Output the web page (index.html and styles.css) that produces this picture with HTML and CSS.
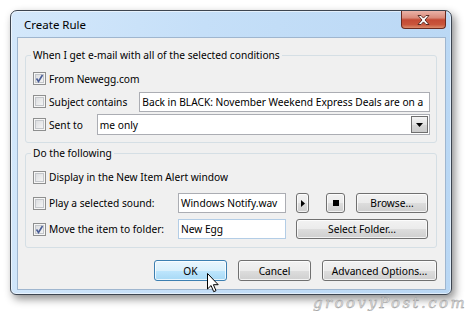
FILE: index.html
```html
<!DOCTYPE html>
<html>
<head>
    <title>Create Rule</title>
    <link rel="stylesheet" href="styles.css">
</head>
<body>
    <div class="window">
        <div class="titlebar">
            <span class="title">Create Rule</span>
            <span class="close">
                <svg width="13" height="10" viewBox="0 0 13 10"><path d="M1 0.5h3l2.5 2.6 2.5-2.6h3l-4 4.5 4 4.5h-3l-2.5-2.6-2.5 2.6h-3l4-4.5z" fill="#fff" stroke="#4b2019" stroke-width="0.9" stroke-linejoin="round"/></svg>
            </span>
        </div>
        <div class="client">
            <fieldset class="group group-when">
                <legend>When I get e-mail with all of the selected conditions</legend>
                <div class="row">
                    <span class="check"><svg width="9" height="9" viewBox="0 0 9 9"><path d="M1.5 4.5l2 3 4-6.5" fill="none" stroke="#4a5d96" stroke-width="1.6"/></svg></span>
                    <span class="label">From Newegg.com</span>
                </div>
                <div class="row">
                    <span class="check"></span>
                    <span class="label">Subject contains</span>
                    <span class="field wide subject">Back in BLACK: November Weekend Express Deals are on a</span>
                </div>
                <div class="row">
                    <span class="check"></span>
                    <span class="label">Sent to</span>
                    <span class="field wide combo">me only
                        <span class="drop"><svg width="7" height="4" viewBox="0 0 7 4"><path d="M0 0h7l-3.5 4z" fill="#000"/></svg></span>
                    </span>
                </div>
            </fieldset>

            <fieldset class="group group-do">
                <legend>Do the following</legend>
                <div class="row">
                    <span class="check"></span>
                    <span class="label">Display in the New Item Alert window</span>
                </div>
                <div class="row">
                    <span class="opt"><span class="check"></span><span class="label">Play a selected sound:</span></span>
                    <span class="field sound">Windows Notify.wav</span>
                    <span class="btn play"><svg width="4" height="7" viewBox="0 0 4 7"><path d="M0 0l4 3.5-4 3.5z" fill="#000"/></svg></span>
                    <span class="btn stop"><svg width="6" height="6" viewBox="0 0 6 6"><rect width="6" height="6" fill="#000"/></svg></span>
                    <span class="btn browse">Browse...</span>
                </div>
                <div class="row">
                    <span class="opt"><span class="check"><svg width="9" height="9" viewBox="0 0 9 9"><path d="M1.5 4.5l2 3 4-6.5" fill="none" stroke="#4a5d96" stroke-width="1.6"/></svg></span><span class="label">Move the item to folder:</span></span>
                    <span class="field folder">New Egg</span>
                    <span class="btn select">Select Folder...</span>
                </div>
            </fieldset>

            <div class="actions">
                <span class="btn big ok">OK
                    <svg class="pointer" width="12" height="20" viewBox="0 0 12 20"><path d="M0.5 0.5v15.5l3.6-3.5 2.6 6.2 2.3-1-2.6-6h4.8z" fill="#fff" stroke="#000" stroke-width="1" stroke-linejoin="round"/></svg>
                </span>
                <span class="btn big">Cancel</span>
                <span class="btn big advanced">Advanced Options...</span>
            </div>
        </div>
    </div>
    <div class="watermark">groovyPost.com</div>
</body>
</html>
```

FILE: styles.css
```css
body {
    margin: 0;
    padding: 10px 0 0 10px;
    font-family: "Noto Sans", sans-serif;
    font-size: 10.2px;
    background: #fff;
    overflow: hidden;
}
.window {
    width: 442px;
    height: 285px;
    box-sizing: border-box;
    border: 1px solid #3d4550;
    border-radius: 7px 7px 6px 6px;
    background: linear-gradient(100deg, #d4e8fb 0%, #c5dff8 40%, #b9d7f4 100%);
    padding: 0 5px 4px 6px;
    box-shadow: 3px 4px 9px rgba(0,0,0,0.45), inset 0 0 0 1px rgba(255,255,255,0.55);
}
.titlebar {
    height: 26px;
    display: flex;
    justify-content: space-between;
    align-items: flex-start;
}
.title {
    font-size: 11.5px;
    line-height: 15px;
    padding: 6px 0 0 7px;
    color: #000;
}
.close {
    width: 45px;
    height: 18px;
    box-sizing: border-box;
    border: 1px solid #6a2a1f;
    border-top: none;
    border-radius: 0 0 4px 4px;
    background: linear-gradient(#eab3a8 0%, #d98a7a 40%, #c44a34 52%, #c9563c 80%, #dc8c6c 100%);
    display: flex;
    align-items: center;
    justify-content: center;
}
.client {
    height: 253px;
    box-sizing: border-box;
    background: #f0f0f0;
    border: 1px solid #9fb6cf;
    padding: 10px 8px 0 7px;
}
.group {
    margin: 0;
    min-width: 0;
    border: 1px solid #d5dfe5;
    border-radius: 3px;
    padding: 4px 6px 6px 7px;
}
.group legend {
    margin-left: -2px;
    padding: 0 2px;
    line-height: 15px;
}
.group-do {
    margin-top: 3px;
    padding: 6px 8px 8px 7px;
}
.row {
    display: flex;
    align-items: center;
    height: 23px;
}
.group-do .row {
    height: 20px;
}
.group-do .row + .row {
    margin-top: 6px;
}
.check {
    flex: none;
    width: 13px;
    height: 13px;
    box-sizing: border-box;
    border: 1px solid #8e8f8f;
    background: linear-gradient(135deg, #d6d8db, #fafafa);
    box-shadow: inset 0 0 0 1px #f6f6f6, inset 0 0 0 2px #c3c6ca;
    margin-right: 3px;
    display: flex;
    align-items: center;
    justify-content: center;
}
.label {
    white-space: nowrap;
}
.opt {
    flex: none;
    width: 145px;
    display: flex;
    align-items: center;
}
.field {
    height: 20px;
    box-sizing: border-box;
    background: #fff;
    border: 1px solid #abadb3;
    padding: 0 3px 0 2px;
    line-height: 18px;
    white-space: nowrap;
    overflow: hidden;
}
.wide {
    flex: 1;
    margin-left: 12px;
}
.combo {
    height: 21px;
    margin-left: 14px;
    display: flex;
    align-items: center;
    justify-content: space-between;
    padding-right: 1px;
}
.drop {
    width: 17px;
    height: 17px;
    box-sizing: border-box;
    border: 1px solid #6f6f6f;
    background: linear-gradient(#f4f4f4, #e2e2e2 50%, #d6d6d6 51%, #cbcbcb);
    display: flex;
    align-items: center;
    justify-content: center;
}
.sound, .folder {
    width: 108px;
    flex: none;
}
.folder {
    border-color: #b3cde6;
}
.btn {
    flex: none;
    height: 20px;
    box-sizing: border-box;
    border: 1px solid #707070;
    border-radius: 3px;
    background: linear-gradient(#f2f2f2 0%, #ebebeb 50%, #dddddd 51%, #cfcfcf 100%);
    box-shadow: inset 0 0 0 1px rgba(255,255,255,0.75);
    display: flex;
    align-items: center;
    justify-content: center;
    color: #000;
    white-space: nowrap;
}
.play {
    width: 13px;
    margin-left: 10px;
}
.stop {
    width: 19px;
    margin-left: 17px;
}
.browse {
    width: 72px;
    margin-left: 11px;
}
.select {
    width: 132px;
    margin-left: 10px;
}
.actions {
    display: flex;
    justify-content: flex-end;
    gap: 11px;
    margin-top: 12px;
}
.big {
    width: 73px;
    height: 21px;
}
.advanced {
    width: 115px;
}
.ok {
    position: relative;
    border-color: #3c7fb1;
    background: linear-gradient(#eaf6fd 0%, #d9f0fc 50%, #bee6fd 51%, #a7d9f5 100%);
}
.pointer {
    position: absolute;
    left: 52px;
    top: 12px;
}
.watermark {
    width: 457px;
    text-align: right;
    font-family: "DejaVu Serif", serif;
    font-style: italic;
    font-size: 15px;
    letter-spacing: 2.4px;
    line-height: 16px;
    color: #dadada;
    -webkit-text-stroke: 0.4px #9a9a9a;
}
```
